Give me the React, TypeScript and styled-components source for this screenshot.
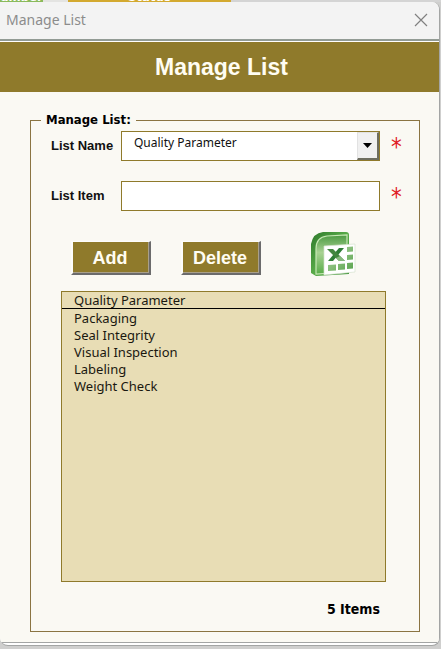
import React, { useState } from "react";
import styled, { createGlobalStyle } from "styled-components";

const olive = "#8f7a2b";
const cream = "#faf9f3";
const ui = `"DejaVu Sans Condensed", "Noto Sans", sans-serif`;
const listFont = `"Noto Sans", "Open Sans", sans-serif`;
const arial = `"Liberation Sans", Arial, sans-serif`;

const GlobalStyle = createGlobalStyle`
  *, *::before, *::after { box-sizing: border-box; }
  html, body { margin: 0; height: 100%; background: #cfcfce; }
  #root { height: 100%; }
`;

const Page = styled.div`
  display: flex;
  flex-direction: column;
  min-height: 100vh;
`;

const SheetStrip = styled.div`
  display: grid;
  grid-template-columns: 43px 25px 163px 1fr;
  height: 2px;
`;

const SheetCell = styled.div<{ $fill: string }>`
  display: flex;
  align-items: flex-end;
  justify-content: center;
  overflow: hidden;
  background: ${(p) => p.$fill};
  color: #fff;
  font: bold 13px/10px ${ui};
`;

const Dialog = styled.section`
  display: flex;
  flex: 1;
  flex-direction: column;
  margin: 0 1px 3px 0;
  border: solid #a3a5a4;
  border-width: 0 1px 1px 0;
  border-radius: 0 8px 8px 8px;
  background: #fff;
  overflow: hidden;
`;

const TitleBar = styled.header`
  display: flex;
  align-items: center;
  justify-content: space-between;
  height: 39px;
  padding: 0 11px 2px 6px;
  border-bottom: 2px solid #929b94;
  background: #f3f3f3;
  color: #8c8c8c;
  font: 14px/20px "Noto Sans", "Open Sans", sans-serif;
`;

const CloseButton = styled.button`
  display: flex;
  padding: 0;
  border: 0;
  background: none;
  color: #808080;
`;

const Banner = styled.h1`
  margin: 1px 0 0;
  padding: 9px 0 9px 4px;
  background: ${olive};
  color: #fffdf2;
  text-align: center;
  font: bold 23px/32px ${arial};
`;

const Body = styled.main`
  display: flex;
  flex: 1;
  padding: 20px 19px 10px 30px;
  border-bottom: 1px solid #a3a5a4;
  margin-bottom: 2px;
  background: ${cream};
`;

const Group = styled.fieldset`
  display: flex;
  flex: 1;
  flex-direction: column;
  min-width: 0;
  margin: 0;
  padding: 3px 33px 13px 20px;
  border: 1px solid #8a7442;
`;

const Legend = styled.legend`
  margin-left: -10px;
  padding: 0 5px;
  color: #000;
  font: bold 13px/16px ${ui};
`;

const FieldRow = styled.div`
  display: grid;
  grid-template-columns: 70px 1fr 11px;
  align-items: center;
  margin: 0 -16px 20px 0;
`;

const FieldLabel = styled.label`
  color: #111;
  font: bold 13px/16px ${arial};
`;

const Required = styled.span`
  height: 30px;
  color: #e01b24;
  font: 24px/32px ${ui};
`;

const Combo = styled.div`
  display: grid;
  grid-template-columns: 1fr 22px;
  height: 30px;
  margin-right: 11px;
  border: 1px solid ${olive};
  background: #fff;
`;

const ComboSelect = styled.select`
  grid-area: 1 / 1 / 2 / 3;
  width: 100%;
  padding: 0 24px 6px 12px;
  border: 0;
  border-radius: 0;
  outline: 0;
  appearance: none;
  background: transparent;
  color: #111;
  font: 12px/20px ${listFont};
`;

const ComboArrow = styled.span`
  grid-area: 1 / 2 / 2 / 3;
  display: flex;
  align-items: center;
  justify-content: center;
  border: solid;
  border-width: 1px 2px 2px 1px;
  border-color: #e2e2e2 #6d6d60 #6d6d60 #e2e2e2;
  background: #f0f0f0;
  pointer-events: none;
`;

const TextBox = styled.input`
  width: auto;
  min-width: 0;
  height: 30px;
  margin-right: 11px;
  padding: 0 12px;
  border: 1px solid ${olive};
  border-radius: 0;
  outline: 0;
  background: #fff;
  font: 12px/20px ${listFont};
`;

const Actions = styled.div`
  display: flex;
  align-items: flex-start;
`;

const ActionButton = styled.button`
  width: 80px;
  height: 34px;
  margin: 10px 10px 0 20px;
  padding: 0 2px 0 0;
  border: solid;
  border-width: 1px 2px 2px 2px;
  border-color: #fdfdfb #6b6b6b #6b6b6b #fdfdfb;
  box-shadow: inset -1px -1px 0 #a9a08a;
  background: ${olive};
  color: #fffdf2;
  font: bold 18px/20px ${arial};
`;

const ExportButton = styled.button`
  display: flex;
  margin: 0 28px 0 auto;
  padding: 0;
  border: 0;
  background: none;
`;

const ListPanel = styled.div`
  display: flex;
  flex: 1;
  flex-direction: column;
  margin: 12px 0 0 10px;
  border: 1px solid ${olive};
  background: #e8ddb5;
  color: #1a1810;
  font: 13px/17px ${listFont};
`;

const ListHead = styled.label`
  padding: 0 12px;
  border-bottom: 1px solid #000;
  line-height: 16px;
`;

const ListBox = styled.select`
  flex: 1;
  padding: 0;
  border: 0;
  border-radius: 0;
  outline: 0;
  overflow: hidden;
  background: transparent;
  color: inherit;
  font: inherit;
`;

const ListOption = styled.option`
  height: 17px;
  min-height: 17px;
  padding: 0 12px;
  line-height: 17px;
`;

const Count = styled.output`
  margin: 18px 6px 0 0;
  text-align: right;
  color: #000;
  font: bold 14px/18px ${ui};
`;

function SpreadsheetIcon() {
  return (
    <svg width="48" height="48" viewBox="0 0 48 48" aria-hidden="true">
      <defs>
        <linearGradient id="frame" x1="0" y1="0" x2="1" y2="1">
          <stop offset="0" stopColor="#2f7a2c" />
          <stop offset=".5" stopColor="#58ab48" />
          <stop offset="1" stopColor="#3c9136" />
        </linearGradient>
        <linearGradient id="face" x1="0" y1="0" x2="0" y2="1">
          <stop offset="0" stopColor="#4c9a42" />
          <stop offset=".45" stopColor="#a9d293" />
          <stop offset="1" stopColor="#58ad48" />
        </linearGradient>
        <linearGradient id="cell" x1="0" y1="0" x2="1" y2="1">
          <stop offset="0" stopColor="#b3d6a4" />
          <stop offset="1" stopColor="#5aa44e" />
        </linearGradient>
      </defs>
      <path d="M1 13Q3 2 13 1H36Q39 1 39 4V43L6 45L1 42Z" fill="url(#frame)" />
      <path d="M6 18Q6 6 17 5L37 4V41L6 43Z" fill="url(#face)" stroke="#c6e8b4" strokeWidth="1.2" />
      <path d="M14 15L45 13V41L14 44Z" fill="#fff" stroke="#d5e3cf" strokeWidth=".7" />
      <path d="M37 16l6-.4v5l-6 .4zM37 24l6-.4v5l-6 .4zM37 32l6-.4v6l-6 .4zM18 34l8-.5v6l-8 .5zM28 33l7-.5v6l-7 .5z" fill="url(#cell)" />
      <path d="M29 17h5l-11 13h-5z" fill="#2f7d36" />
      <path d="M17 18h6l12 12h-6z" fill="#43863f" />
      <path d="M26 27l3 3h6l-5-5z" fill="#86b87c" />
    </svg>
  );
}

const items = ["Packaging", "Seal Integrity", "Visual Inspection", "Labeling", "Weight Check"];

export default function App() {
  const [entry, setEntry] = useState("");

  return (
    <>
      <GlobalStyle />
      <Page>
        <SheetStrip aria-hidden="true">
          <SheetCell $fill="#8aba5c">umber</SheetCell>
          <SheetCell $fill="#e4e4e2" />
          <SheetCell $fill="#d3a92f">Status</SheetCell>
          <SheetCell $fill="#d4d4d4" />
        </SheetStrip>
        <Dialog aria-label="Manage List">
          <TitleBar>
            <span>Manage List</span>
            <CloseButton type="button" aria-label="Close">
              <svg width="14" height="14" viewBox="0 0 14 14" fill="none" stroke="currentColor" strokeWidth="1.2">
                <path d="M1 1l12 12M13 1L1 13" />
              </svg>
            </CloseButton>
          </TitleBar>
          <Banner>Manage List</Banner>
          <Body>
            <Group>
              <Legend>Manage List:</Legend>
              <FieldRow>
                <FieldLabel htmlFor="list-name">List Name</FieldLabel>
                <Combo>
                  <ComboSelect id="list-name" defaultValue="Quality Parameter">
                    <option>Quality Parameter</option>
                  </ComboSelect>
                  <ComboArrow>
                    <svg width="9" height="5" viewBox="0 0 9 5">
                      <path d="M0 0h9L4.500 5z" fill="#000" />
                    </svg>
                  </ComboArrow>
                </Combo>
                <Required>*</Required>
              </FieldRow>
              <FieldRow>
                <FieldLabel htmlFor="list-item">List Item</FieldLabel>
                <TextBox id="list-item" value={entry} onChange={(e) => setEntry(e.target.value)} />
                <Required>*</Required>
              </FieldRow>
              <Actions>
                <ActionButton type="button">Add</ActionButton>
                <ActionButton type="button">Delete</ActionButton>
                <ExportButton type="button" aria-label="Export to spreadsheet">
                  <SpreadsheetIcon />
                </ExportButton>
              </Actions>
              <ListPanel>
                <ListHead htmlFor="items">Quality Parameter</ListHead>
                <ListBox id="items" size={6}>
                  {items.map((item) => (
                    <ListOption key={item}>{item}</ListOption>
                  ))}
                </ListBox>
              </ListPanel>
              <Count>5 Items</Count>
            </Group>
          </Body>
        </Dialog>
      </Page>
    </>
  );
}
